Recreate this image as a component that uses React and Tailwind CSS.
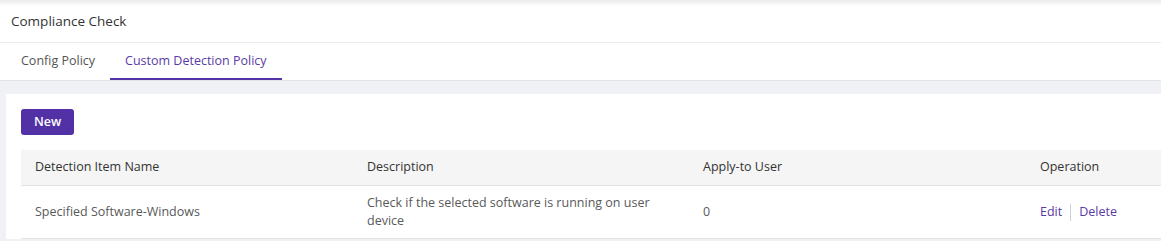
const rows = [
  {
    name: 'Specified Software-Windows',
    description: 'Check if the selected software is running on user device',
    users: 0,
  },
]

const tabs = ['Config Policy', 'Custom Detection Policy']

export default function App() {
  const active = 'Custom Detection Policy'

  return (
    <div className="h-[241px] w-full overflow-hidden bg-[#f0f1f5] font-['Open_Sans',sans-serif] text-[12.5px]">
      {/* Page header */}
      <div className="h-[43px] border-b border-[#ebebeb] bg-[linear-gradient(to_bottom,#e9e9e9,#ffffff_6px)] px-[11px] pt-[11px]">
        <h1 className="text-[13.5px] leading-[20px] text-[#333]">Compliance Check</h1>
      </div>

      {/* Tabs */}
      <div className="flex h-[38px] border-b border-[#e3e3e6] bg-white pl-[6px]">
        {tabs.map(tab => (
          <button
            key={tab}
            className={`h-full px-[15px] pt-[1px] text-[12.5px] ${
              tab === active
                ? 'border-b-2 border-[#5533a8] text-[#5a3aa6]'
                : 'border-b-2 border-transparent text-[#555]'
            }`}
          >
            {tab}
          </button>
        ))}
      </div>

      {/* Content card */}
      <div className="ml-[6px] mt-[13px] bg-white pl-[15px] pt-[15px]">
        <button className="h-[26px] w-[53px] rounded-[3px] bg-[#5230a6] text-[12.5px] font-semibold text-white">
          New
        </button>

        <div className="mt-[15px]">
          <div className="grid h-[36px] grid-cols-[332px_336px_337px_1fr] items-center border-b border-[#e3e3e3] bg-[#f5f5f5] text-[#333]">
            <div className="px-[14px]">Detection Item Name</div>
            <div className="px-[14px]">Description</div>
            <div className="px-[14px]">Apply-to User</div>
            <div className="px-[14px]">Operation</div>
          </div>
          {rows.map(row => (
            <div
              key={row.name}
              className="grid h-[53px] grid-cols-[332px_336px_337px_1fr] items-center border-b border-[#e3e3e3] text-[#595959]"
            >
              <div className="px-[14px]">{row.name}</div>
              <div className="px-[14px] leading-[18px]">{row.description}</div>
              <div className="px-[14px]">{row.users}</div>
              <div className="flex items-center px-[14px] text-[#5a3aa6]">
                <span className="cursor-pointer">Edit</span>
                <span className="mx-[8px] h-[17px] w-px bg-[#d0d0d6]" />
                <span className="cursor-pointer">Delete</span>
              </div>
            </div>
          ))}
        </div>
      </div>
    </div>
  )
}
